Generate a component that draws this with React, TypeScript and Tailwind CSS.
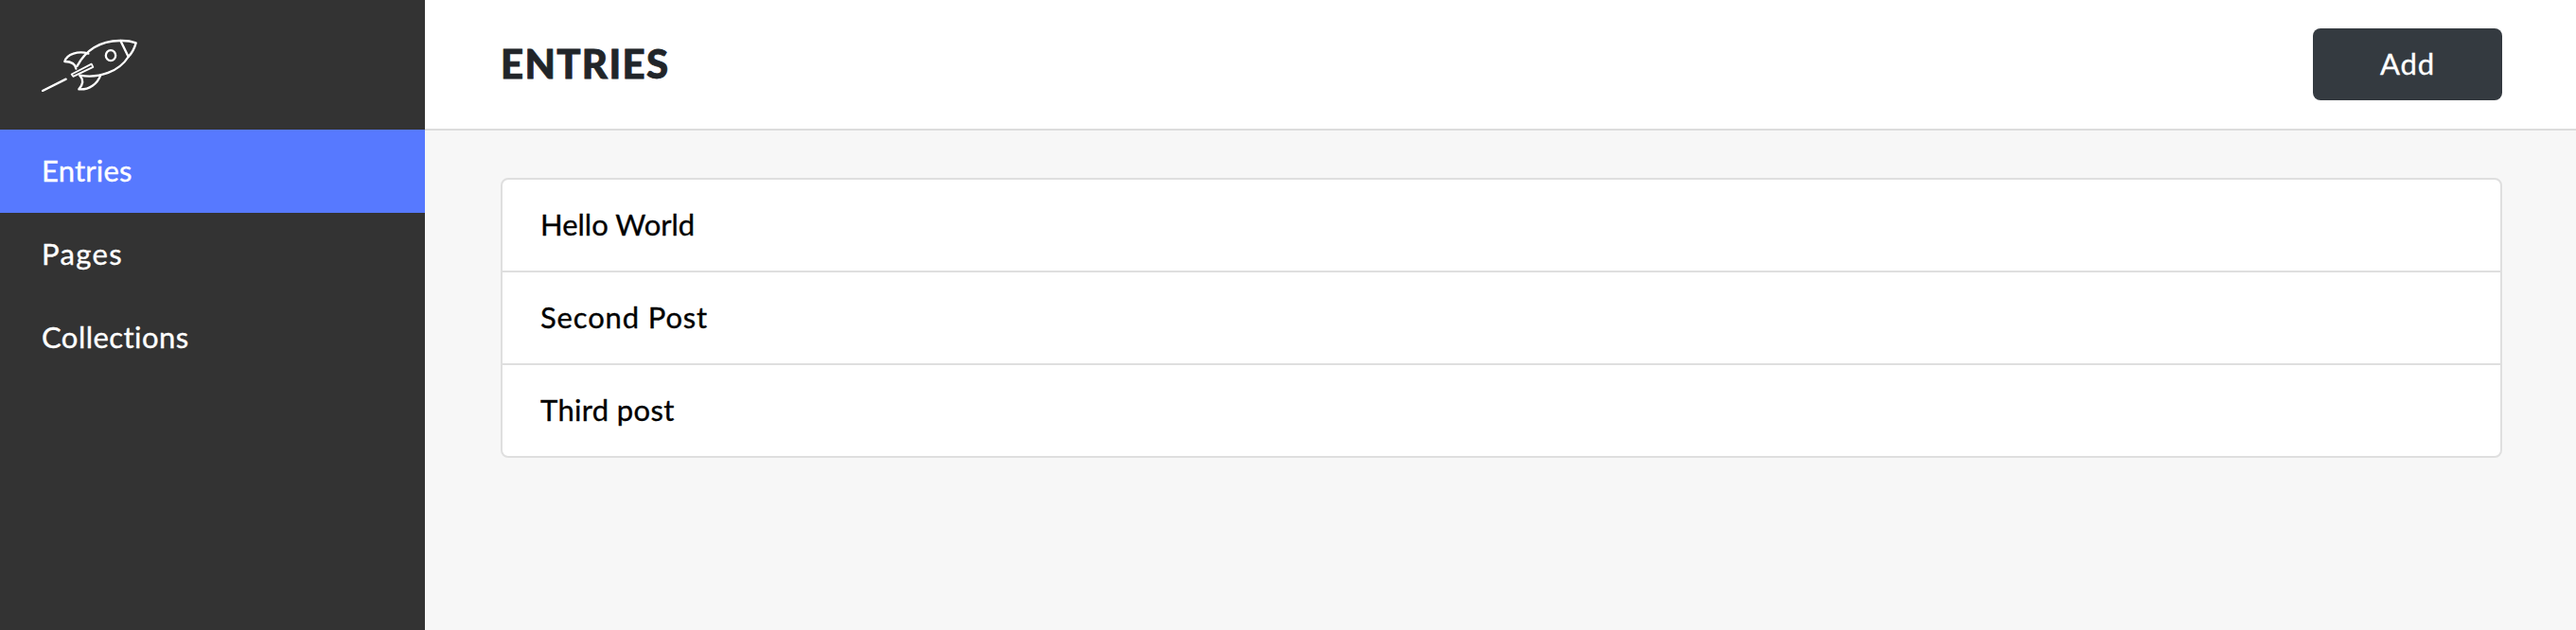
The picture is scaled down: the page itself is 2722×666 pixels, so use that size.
const nav = [
  { label: 'Entries', active: true, spacing: 'tracking-[0.2px]' },
  { label: 'Pages', active: false, spacing: 'tracking-[1.4px]' },
  { label: 'Collections', active: false, spacing: 'tracking-[0.45px]' },
];

const entries = [
  { title: 'Hello World', spacing: 'tracking-normal' },
  { title: 'Second Post', spacing: 'tracking-[0.85px]' },
  { title: 'Third post', spacing: 'tracking-[0.35px]' },
];

function RocketLogo() {
  return (
    <svg
      viewBox="42 33 303 168"
      className="block h-[56px] w-[101px]"
      fill="none"
      stroke="white"
      strokeWidth="7"
      strokeLinecap="round"
      strokeLinejoin="round"
    >
      <path d="M45 198 119 161" />
      <path d="M155 119C180 72 226 38 292 39Q318 38 341 46Q334 72 317 90C288 136 226 160 163 149" />
      <path d="M292 39 317 90" />
      <ellipse cx="261" cy="86" rx="15.5" ry="16.5" />
      <path d="M190 80C158 70 122 82 115 105Q148 105 151 128" />
      <path d="M229 148C219 176 192 196 160 193Q181 170 164 151" />
      <path strokeWidth="5.5" d="M137 145.5 200 113 205 122.5 142 152.5Z" />
    </svg>
  );
}

export default function App() {
  return (
    <div className="flex h-[666px] w-full bg-[#f7f7f7] font-['Lato',sans-serif] text-[31px] leading-[48px] [-webkit-text-stroke:0.35px] [font-variant-ligatures:none]">
      <aside className="flex w-[449px] shrink-0 flex-col bg-[#333333] text-white">
        <div className="h-[137px] pt-[41px] pl-11">
          <RocketLogo />
        </div>
        <nav className="flex flex-col">
          {nav.map((item) => (
            <a
              key={item.label}
              className={`flex h-[88px] items-center pb-0.5 pl-11 ${item.spacing} ${item.active ? 'bg-[#5779ff]' : ''}`}
            >
              {item.label}
            </a>
          ))}
        </nav>
      </aside>
      <div className="flex min-w-0 flex-1 flex-col">
        <header className="flex h-[138px] shrink-0 items-center justify-between border-b-2 border-[#dcdcdc] bg-white pr-[78px] pl-20">
          <h1 className="pb-0.5 text-[42px] font-black tracking-[1.3px] text-[#212529] [-webkit-text-stroke:0.8px]">
            ENTRIES
          </h1>
          <button className="h-[76px] w-[200px] rounded-lg bg-[#343a40] pb-0.5 tracking-[0.8px] text-white">
            Add
          </button>
        </header>
        <main className="pt-[50px] pr-[78px] pl-20">
          <ul className="divide-y-2 divide-[#dfdfdf] rounded-lg border-2 border-[#dfdfdf] bg-white text-black">
            {entries.map((entry) => (
              <li
                key={entry.title}
                className={`flex h-[98px] items-center pb-0.5 pl-10 last:h-24 ${entry.spacing}`}
              >
                {entry.title}
              </li>
            ))}
          </ul>
        </main>
      </div>
    </div>
  );
}
